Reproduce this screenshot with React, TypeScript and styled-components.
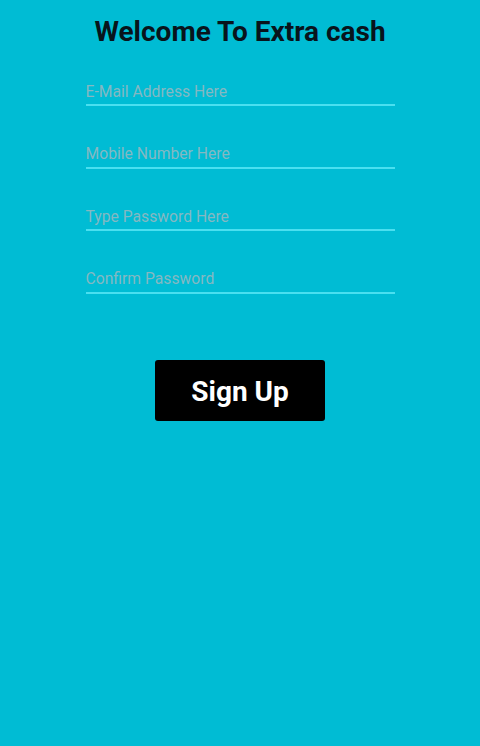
import styled, { createGlobalStyle } from "styled-components";

const GlobalStyle = createGlobalStyle`
  html, body {
    margin: 0;
    padding: 0;
    background: #00bcd4;
  }

  body {
    font-family: Roboto, "Liberation Sans", sans-serif;
  }
`;

const Screen = styled.div`
  width: 480px;
  height: 746px;
  background: #00bcd4;
  display: flex;
  flex-direction: column;
  align-items: center;
  box-sizing: border-box;
  padding-top: 14px;
`;

const Title = styled.h1`
  margin: 0;
  font-size: 28px;
  font-weight: 700;
  line-height: 36px;
  color: #08141c;
`;

const Form = styled.div`
  width: 309px;
  margin-top: 28px;
  display: flex;
  flex-direction: column;
  gap: 34.5px;
`;

const Field = styled.input`
  display: block;
  width: 100%;
  box-sizing: border-box;
  height: 28px;
  padding: 0;
  border: none;
  border-bottom: 2px solid #4adff0;
  background: transparent;
  outline: none;
  font-family: Roboto, "Liberation Sans", sans-serif;
  font-size: 15.7px;
  color: #08141c;

  &::placeholder {
    color: #84b8c2;
  }
`;

const SubmitButton = styled.button`
  margin-top: 66px;
  width: 170px;
  height: 61px;
  padding: 3px 0 0;
  border: none;
  border-radius: 3px;
  background: #000;
  color: #fff;
  font-family: Roboto, "Liberation Sans", sans-serif;
  font-size: 28px;
  font-weight: 700;
  cursor: pointer;
`;

const fields = [
  { type: "email", hint: "E-Mail Address Here" },
  { type: "tel", hint: "Mobile Number Here" },
  { type: "password", hint: "Type Password Here" },
  { type: "password", hint: "Confirm Password" },
];

export default function App() {
  return (
    <>
      <GlobalStyle />
      <Screen>
        <Title>Welcome To Extra cash</Title>
        <Form>
          {fields.map((field) => (
            <Field key={field.hint} type={field.type} placeholder={field.hint} />
          ))}
        </Form>
        <SubmitButton>Sign Up</SubmitButton>
      </Screen>
    </>
  );
}
